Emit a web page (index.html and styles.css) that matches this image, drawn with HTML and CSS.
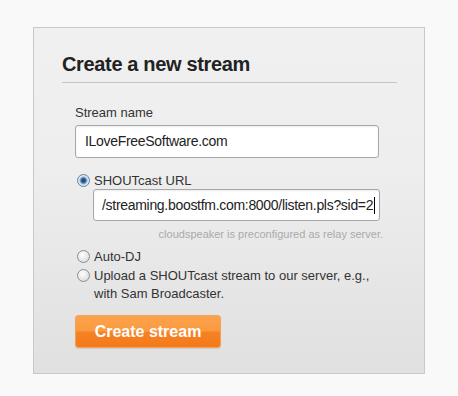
FILE: index.html
```html
<!DOCTYPE html>
<html lang="en">
<head>
    <meta charset="UTF-8">
    <title>Create a new stream</title>
    <link rel="stylesheet" href="styles.css">
</head>
<body>
    <div class="panel">
        <h1 class="panel-title">Create a new stream</h1>

        <div class="form">
            <label class="label">Stream name</label>
            <div class="field field-name">ILoveFreeSoftware.com</div>

            <div class="option option-first">
                <span class="radio checked"></span>
                <span>SHOUTcast URL</span>
            </div>
            <div class="field field-url">/streaming.boostfm.com:8000/listen.pls?sid=2<span class="caret"></span></div>
            <div class="hint">cloudspeaker is preconfigured as relay server.</div>

            <div class="option option-auto">
                <span class="radio"></span>
                <span>Auto-DJ</span>
            </div>
            <div class="option">
                <span class="radio"></span>
                <span>Upload a SHOUTcast stream to our server, e.g., with Sam Broadcaster.</span>
            </div>

            <button class="create-button">Create stream</button>
        </div>
    </div>
</body>
</html>
```

FILE: styles.css
```css
body {
    margin: 0;
    padding: 27px 0 0 33px;
    background-color: #f9f9f9;
    font-family: "Liberation Sans", Arial, sans-serif;
    color: #333;
}

.panel {
    width: 335px;
    padding: 24px 27px 25px 28px;
    border: 1px solid #c9c9c9;
    background: linear-gradient(#f0f0f0, #eeeeee 40%, #e0e0e0);
}

.panel-title {
    margin: 0;
    padding-bottom: 6px;
    border-bottom: 1px solid #c4c4c4;
    font-size: 20px;
    line-height: 24px;
    font-weight: bold;
    letter-spacing: -0.35px;
    color: #222;
}

.form {
    padding: 22px 0 0 13px;
}

.label {
    display: block;
    font-size: 13px;
    line-height: 16px;
    margin-bottom: 4px;
}

.field {
    box-sizing: border-box;
    border: 1px solid #a8a8a8;
    border-radius: 3px;
    background-color: #fff;
    box-shadow: inset 0 1px 2px rgba(0,0,0,0.08);
    font-size: 14px;
    letter-spacing: -0.3px;
    color: #222;
    white-space: nowrap;
    overflow: hidden;
}

.field-name {
    width: 304px;
    height: 33px;
    line-height: 31px;
    padding-left: 9px;
}

.field-url {
    width: 287px;
    height: 32px;
    line-height: 30px;
    padding-left: 8px;
    margin-left: 18px;
}

.caret {
    display: inline-block;
    width: 1px;
    height: 17px;
    margin-left: 1px;
    background-color: #000;
    vertical-align: -4px;
}

.hint {
    width: 308px;
    margin-top: 6px;
    font-size: 11px;
    line-height: 14px;
    color: #aaa;
    text-align: right;
}

.option {
    display: flex;
    align-items: flex-start;
    gap: 4px;
    width: 308px;
    padding-left: 2px;
    font-size: 13px;
    line-height: 18px;
}

.option-first {
    margin-top: 15px;
    line-height: 16px;
}

.option-first .radio {
    margin-top: 1px;
}

.option-auto {
    margin-top: 7px;
    margin-bottom: 1px;
}

.radio {
    flex: none;
    box-sizing: border-box;
    width: 13px;
    height: 13px;
    margin-top: 2px;
    border: 1px solid #8c8c8c;
    border-radius: 50%;
    background: radial-gradient(circle at 40% 35%, #fff, #e4e4e4 60%, #cfcfcf);
}

.radio.checked {
    border-color: #6a7f95;
    background: radial-gradient(circle, #1f3f66 0, #2f5f8f 2px, #8fb4d8 3.5px, #dce8f2 4.5px, #e8eef4);
}

.create-button {
    display: block;
    width: 146px;
    height: 33px;
    margin-top: 12px;
    padding: 0;
    border: 1px solid #f3a35c;
    border-radius: 3px;
    background: linear-gradient(#fca34d, #fb9a3f 48%, #f68224 52%, #f37a1a);
    box-shadow: 0 1px 1px rgba(0,0,0,0.1);
    color: #fff;
    font-family: "Liberation Sans", Arial, sans-serif;
    font-size: 16px;
    font-weight: bold;
    cursor: pointer;
}
```
